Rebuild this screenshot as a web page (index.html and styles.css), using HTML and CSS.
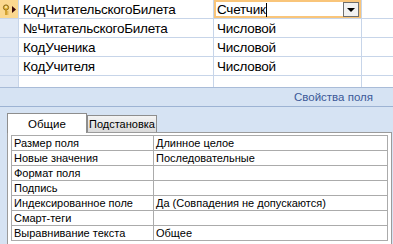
FILE: index.html
```html
<!DOCTYPE html>
<html>
<head>
    <title>Конструктор таблицы</title>
    <link rel="stylesheet" href="styles.css">
</head>
<body>
    <div class="design-grid">
        <table class="field-table">
            <tr class="field-row current">
                <td class="row-sel">
                    <svg class="key-icon" width="16" height="12" viewBox="0 0 16 12">
                        <circle cx="4" cy="3.5" r="2.6" fill="#e7b840" stroke="#8a6a1c" stroke-width="1"/>
                        <circle cx="4" cy="3" r="0.9" fill="#fff3c4"/>
                        <rect x="3.2" y="5.5" width="1.6" height="5.5" fill="#c9961f"/>
                        <rect x="4.8" y="7.5" width="1.6" height="1" fill="#c9961f"/>
                        <rect x="4.8" y="9.5" width="1.6" height="1" fill="#c9961f"/>
                        <polygon points="10,2 14,5.5 10,9" fill="#3a0a0a"/>
                    </svg>
                </td>
                <td class="field-name">КодЧитательскогоБилета</td>
                <td class="field-type active">
                    <span>Счетчик</span><span class="caret"></span>
                    <span class="drop-btn"><span class="drop-arrow"></span></span>
                </td>
                <td class="field-desc"></td>
            </tr>
            <tr class="field-row">
                <td class="row-sel"></td>
                <td class="field-name">№ЧитательскогоБилета</td>
                <td class="field-type">Числовой</td>
                <td class="field-desc"></td>
            </tr>
            <tr class="field-row">
                <td class="row-sel"></td>
                <td class="field-name">КодУченика</td>
                <td class="field-type">Числовой</td>
                <td class="field-desc"></td>
            </tr>
            <tr class="field-row">
                <td class="row-sel"></td>
                <td class="field-name">КодУчителя</td>
                <td class="field-type">Числовой</td>
                <td class="field-desc"></td>
            </tr>
            <tr class="field-row">
                <td class="row-sel"></td>
                <td class="field-name"></td>
                <td class="field-type"></td>
                <td class="field-desc"></td>
            </tr>
        </table>
    </div>

    <div class="props-bar">
        <span class="props-title">Свойства поля</span>
    </div>

    <div class="props-panel">
        <div class="tabs">
            <div class="tab tab-active">Общие</div>
            <div class="tab">Подстановка</div>
        </div>
        <div class="sheet">
            <table class="prop-table">
                <tr><td class="prop-name">Размер поля</td><td class="prop-value">Длинное целое</td></tr>
                <tr><td class="prop-name">Новые значения</td><td class="prop-value">Последовательные</td></tr>
                <tr><td class="prop-name">Формат поля</td><td class="prop-value"></td></tr>
                <tr><td class="prop-name">Подпись</td><td class="prop-value"></td></tr>
                <tr><td class="prop-name">Индексированное поле</td><td class="prop-value">Да (Совпадения не допускаются)</td></tr>
                <tr><td class="prop-name">Смарт-теги</td><td class="prop-value"></td></tr>
                <tr><td class="prop-name">Выравнивание текста</td><td class="prop-value">Общее</td></tr>
            </table>
        </div>
    </div>
</body>
</html>
```

FILE: styles.css
```css
body {
    margin: 0;
    padding: 0;
    width: 393px;
    height: 244px;
    overflow: hidden;
    background-color: #d6e3f3;
    font-family: 'Liberation Sans', Arial, sans-serif;
    color: #000;
}

/* верхняя сетка полей */
.design-grid {
    height: 87px;
    overflow: hidden;
    background-color: #fff;
    border-bottom: 1px solid #a9bcd8;
}

.field-table {
    border-collapse: collapse;
    table-layout: fixed;
    width: 420px;
}

.field-row td {
    height: 18px;
    padding: 0;
    border-bottom: 1px solid #c7d5e9;
    border-right: 1px solid #c7d5e9;
    font-size: 13.5px;
    letter-spacing: -0.25px;
    white-space: nowrap;
    vertical-align: middle;
}

.row-sel {
    width: 18px;
    background-color: #dfe8f5;
}

.current .row-sel {
    background-color: #fbd88f;
}

.key-icon {
    display: block;
    margin: 1px 0 0 2px;
}

.field-name {
    width: 190px;
    padding-left: 4px !important;
}

.field-type {
    width: 144px;
    padding-left: 3px !important;
    position: relative;
}

.field-type.active {
    box-shadow: inset 0 0 0 2px #f9c57a;
}

.caret {
    display: inline-block;
    width: 1px;
    height: 14px;
    background-color: #000;
    vertical-align: -3px;
}

.drop-btn {
    position: absolute;
    right: 2px;
    top: 2px;
    width: 14px;
    height: 13px;
    border: 1px solid #6f6f6f;
    background-color: #f2f2f2;
    display: flex;
    align-items: center;
    justify-content: center;
}

.drop-arrow {
    width: 0;
    height: 0;
    border-left: 4px solid transparent;
    border-right: 4px solid transparent;
    border-top: 4px solid #000;
}

/* полоса "Свойства поля" */
.props-bar {
    height: 18px;
    border-bottom: 1px solid #9db3d3;
    display: flex;
    justify-content: flex-end;
    align-items: center;
    padding-right: 20px;
}

.props-title {
    font-size: 11.5px;
    color: #3b5998;
}

/* вкладки */
.props-panel {
    padding: 5px 1px 0 7px;
}

.tabs {
    display: flex;
    align-items: flex-end;
    height: 20px;
}

.tab {
    font-size: 11px;
    border: 1px solid #8e8e8e;
    border-bottom: none;
    height: 16px;
    line-height: 16px;
    padding: 0 1px;
    background: linear-gradient(#f4f4f4, #dadada);
}

.tab-active {
    width: 78px;
    height: 19px;
    line-height: 20px;
    padding: 0;
    font-size: 11.5px;
    text-align: center;
    background: #fff;
    position: relative;
    top: 1px;
}

.sheet {
    background-color: #fff;
    border: 1px solid #9b9b9b;
    height: 120px;
    padding: 2px 3px 0 3px;
}

.prop-table {
    border-collapse: collapse;
    table-layout: fixed;
    width: 100%;
}

.prop-table td {
    height: 14px;
    padding: 0 0 0 2px;
    border: 1px solid #ababab;
    font-size: 11px;
    white-space: nowrap;
    overflow: hidden;
}

.prop-name {
    width: 139px;
}
```
